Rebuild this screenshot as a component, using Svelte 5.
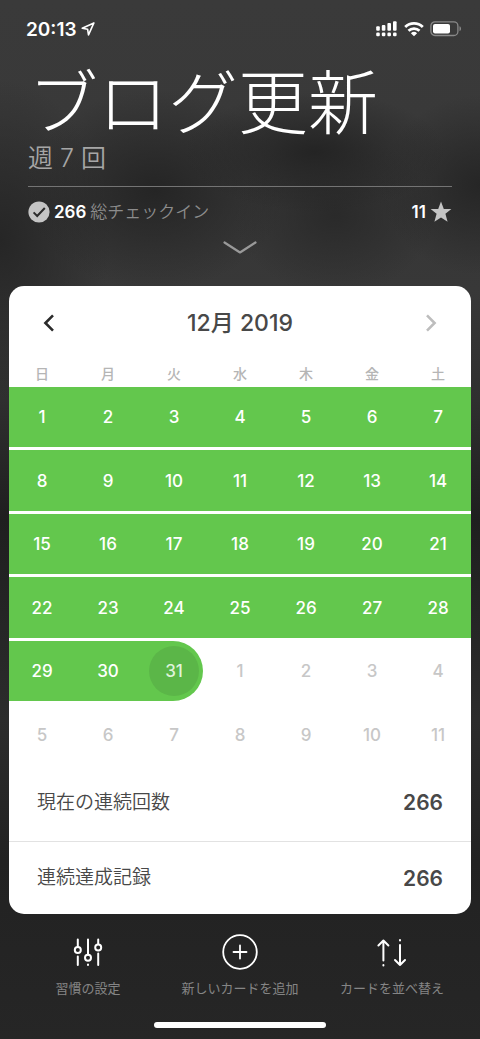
<script>
  const weekdays = ['日', '月', '火', '水', '木', '金', '土'];
  const today = 31;
  const daysInMonth = 31;

  const weeks = Array.from({ length: 6 }, (_, w) =>
    Array.from({ length: 7 }, (_, d) => {
      const n = w * 7 + d + 1;
      return {
        label: n > daysInMonth ? n - daysInMonth : n,
        done: n <= daysInMonth,
        today: n === today
      };
    })
  );

  const stats = [
    { label: '現在の連続回数', value: 266 },
    { label: '連続達成記録', value: 266 }
  ];
</script>

<div class="screen">
  <div class="status">
    <div class="time">
      <span>20:13</span>
      <svg width="14" height="14" viewBox="0 0 14 14" fill="none" stroke="#fff" stroke-width="1.6" stroke-linejoin="round">
        <path d="M12.9 0.9 1.2 6.2 6.6 7.2 7.5 12.9Z" />
      </svg>
    </div>
    <div class="signals">
      <svg width="22" height="16" viewBox="0 0 22 16" fill="#fff">
        <rect x="0.2" y="5.3" width="3.6" height="4.4" rx="1" />
        <rect x="5.8" y="4" width="3.6" height="5.7" rx="1" />
        <rect x="11.4" y="2" width="3.6" height="7.7" rx="1" />
        <rect x="17" y="0.2" width="3.6" height="9.5" rx="1" />
        <rect x="0.2" y="11.5" width="3.6" height="3.8" rx="1.2" />
        <rect x="5.8" y="11.5" width="3.6" height="3.8" rx="1.2" />
        <rect x="11.4" y="11.5" width="3.6" height="3.8" rx="1.2" />
        <rect x="17" y="11.5" width="3.6" height="3.8" rx="1.2" />
      </svg>
      <svg width="20" height="16" viewBox="0 0 20 16" fill="none" stroke="#fff" stroke-width="2.8">
        <path d="M1.2 6a12.6 12.6 0 0 1 17.6 0" />
        <path d="M4.5 9.8a8 8 0 0 1 11 0" />
        <path d="M10 15.3 6.9 12.2a4.5 4.5 0 0 1 6.2 0Z" fill="#fff" stroke="none" />
      </svg>
      <svg width="32" height="16" viewBox="0 0 32 16">
        <rect x="0.9" y="0.9" width="27" height="13.6" rx="4" fill="none" stroke="#8a8a8a" stroke-width="1.3" />
        <rect x="3" y="3" width="17" height="9.5" rx="2" fill="#fff" />
        <path d="M29.5 5.3c2 .6 2 4.2 0 4.8Z" fill="#8a8a8a" />
      </svg>
    </div>
  </div>

  <header>
    <h1>ブログ更新</h1>
    <p class="freq">週 7 回</p>
    <div class="summary">
      <div class="checkins">
        <svg width="22" height="22" viewBox="0 0 22 22">
          <circle cx="11" cy="11" r="10.6" fill="#c4c4c4" />
          <path d="M5.6 11.4 9.2 15 16.8 7" fill="none" stroke="#2b2b2b" stroke-width="2" />
        </svg>
        <strong>266</strong>
        <span>総チェックイン</span>
      </div>
      <div class="stars">
        <strong>11</strong>
        <svg width="22" height="22" viewBox="0 0 22 22" fill="#c4c4c4">
          <path d="M11 .6 13.8 8H21.4L15.4 12.8 17.6 20.8 11 16.4 4.4 20.8 6.6 12.8.6 8H8.2Z" />
        </svg>
      </div>
    </div>
    <button class="expand" aria-label="詳細">
      <svg width="36" height="16" viewBox="0 0 36 16" fill="none" stroke="#999" stroke-width="2.2" stroke-linecap="round" stroke-linejoin="round">
        <path d="M2.5 2.5 18 12.5 33.5 2.5" />
      </svg>
    </button>
  </header>

  <main>
    <div class="month">
      <button aria-label="前の月">
        <svg width="14" height="20" viewBox="0 0 14 20" fill="none" stroke="#2b2b2b" stroke-width="2.6">
          <path d="M11 2.4 3.4 10 11 17.6" />
        </svg>
      </button>
      <h2>12月 2019</h2>
      <button aria-label="次の月">
        <svg width="14" height="20" viewBox="0 0 14 20" fill="none" stroke="#bdbdbd" stroke-width="2.6">
          <path d="M3 2.4 10.6 10 3 17.6" />
        </svg>
      </button>
    </div>

    <table>
      <thead>
        <tr>
          {#each weekdays as day}
            <th scope="col">{day}</th>
          {/each}
        </tr>
      </thead>
      <tbody>
        {#each weeks as week}
          <tr>
            {#each week as day}
              <td>
                <button class="day" class:done={day.done} class:today={day.today}>
                  <span>{day.label}</span>
                </button>
              </td>
            {/each}
          </tr>
        {/each}
      </tbody>
    </table>

    <dl>
      {#each stats as stat}
        <div class="stat">
          <dt>{stat.label}</dt>
          <dd>{stat.value}</dd>
        </div>
      {/each}
    </dl>
  </main>

  <nav>
    <button>
      <svg width="36" height="36" viewBox="0 0 36 36" fill="none" stroke="#fff" stroke-width="2" stroke-linecap="round">
        <path d="M7.8 5.5V12.5M7.8 22.5V31M18 5.5V20.5M18 30.5V31M28.2 5.5V10M28.2 19.5V31" />
        <circle cx="7.8" cy="16" r="3" />
        <circle cx="18" cy="23.8" r="3" />
        <circle cx="28.2" cy="13.4" r="3" />
      </svg>
      <span>習慣の設定</span>
    </button>
    <button>
      <svg width="36" height="36" viewBox="0 0 36 36" fill="none" stroke="#fff" stroke-width="1.8" stroke-linecap="round">
        <circle cx="18" cy="18" r="16.8" />
        <path d="M11.5 18H24.5M18 11.5V24.5" />
      </svg>
      <span>新しいカードを追加</span>
    </button>
    <button>
      <svg width="36" height="36" viewBox="0 0 36 36" fill="none" stroke="#fff" stroke-width="2" stroke-linecap="round" stroke-linejoin="round">
        <path d="M9.4 26.5V6.5M4.4 11.5 9.4 6.5 14.4 11.5M9.4 31V31.4M26 11V31M21 26 26 31 31 26M26 6V6.4" />
      </svg>
      <span>カードを並べ替え</span>
    </button>
  </nav>
  <div class="home"></div>
</div>

<style>
  :global(body) {
    background: #242424;
  }

  .screen {
    min-height: 100vh;
    box-sizing: border-box;
    display: flex;
    flex-direction: column;
    color: #fff;
    font-family: Inter, 'Noto Sans CJK JP', sans-serif;
    background:
      radial-gradient(ellipse 130px 60px at 315px 152px, #242424 0%, #24242400 100%),
      radial-gradient(ellipse 100px 90px at 480px 185px, #262626 0%, #26262600 100%),
      radial-gradient(ellipse 100px 80px at 335px 215px, #2a2a2a 0%, #2a2a2a00 100%),
      radial-gradient(ellipse 130px 100px at 155px 190px, #252525 0%, #25252500 100%),
      radial-gradient(ellipse 110px 160px at 0 240px, #262626 0%, #26262600 100%),
      linear-gradient(#3a3a3a 0, #393939 120px, #363636 200px, #383838 290px, #2f2f2f 400px, #1f1f1f 520px, #2c2c2c 720px, #222 860px, #262626 100%);
  }

  button {
    font: inherit;
    color: inherit;
    background: none;
    border: 0;
    padding: 0;
    cursor: pointer;
  }

  svg {
    display: block;
    flex: none;
  }

  .status {
    display: flex;
    justify-content: space-between;
    align-items: center;
    height: 20px;
    padding: 19px 18px 0 26px;
  }

  .time {
    display: flex;
    align-items: center;
    gap: 4px;
    font-size: 19px;
    font-weight: 600;
  }

  .signals {
    display: flex;
    gap: 6px;
  }

  header {
    padding: 16px 28px 0;
  }

  h1 {
    margin: 0;
    font-family: 'Noto Sans CJK JP', sans-serif;
    font-size: 70px;
    font-weight: 300;
    line-height: 88px;
    white-space: nowrap;
  }

  .freq {
    margin: 0;
    padding: 1px 0 13px;
    border-bottom: 1px solid #747474;
    font-size: 25px;
    font-weight: 350;
    line-height: 29px;
    color: #a6a6a6;
  }

  .summary {
    display: flex;
    justify-content: space-between;
    padding-top: 13px;
    line-height: 24px;
  }

  .checkins,
  .stars {
    display: flex;
    align-items: center;
    gap: 4px;
  }

  .summary strong {
    font-size: 17px;
    font-weight: 600;
  }

  .checkins span {
    font-size: 17px;
    font-weight: 350;
    color: #8c8c8c;
  }

  .expand {
    display: block;
    margin: 16px auto 0;
  }

  main {
    margin: 30px 9px 0;
    background: #fff;
    border-radius: 15px;
    overflow: hidden;
    color: #484848;
  }

  .month {
    display: flex;
    justify-content: space-between;
    align-items: center;
    height: 74px;
    padding: 0 33px;
  }

  h2 {
    margin: 0;
    padding-bottom: 4px;
    font-size: 23px;
    font-weight: 500;
  }

  table {
    width: 100%;
    table-layout: fixed;
    border-collapse: collapse;
  }

  th {
    height: 27px;
    padding: 0;
    font-size: 14px;
    font-weight: 500;
    line-height: 26px;
    color: #b5b5b5;
  }

  td {
    height: 60px;
    padding: 0 0 3px;
  }

  tr:nth-child(even) td {
    height: 61px;
  }

  .day {
    display: block;
    width: 100%;
    height: 60px;
    font-size: 17px;
    font-weight: 500;
    color: #c7c7c7;
  }

  tr:nth-child(even) .day {
    height: 61px;
  }

  .day.done {
    background: #63c74d;
    color: #fff;
  }

  .day.today {
    width: calc(100% - 4px);
    padding-left: 4px;
    border-radius: 0 30px 30px 0;
    color: #dff3da;
  }

  .today span {
    display: block;
    width: 50px;
    margin: 0 auto;
    border-radius: 50%;
    line-height: 50px;
    background: #5bb648;
  }

  dl {
    margin: 0;
  }

  .stat {
    display: flex;
    justify-content: space-between;
    align-items: center;
    height: 72px;
    padding: 0 28px;
  }

  .stat:first-child {
    height: 69px;
    padding-bottom: 4px;
  }

  .stat + .stat {
    border-top: 1px solid #e2e2e2;
  }

  dt {
    font-size: 19px;
    font-weight: 350;
    line-height: 24px;
  }

  dd {
    margin: 0;
    font-size: 21px;
    font-weight: 600;
  }

  nav {
    display: grid;
    grid-template-columns: repeat(3, 1fr);
    padding: 20px 12px 0;
  }

  nav button {
    display: flex;
    flex-direction: column;
    align-items: center;
    gap: 8px;
    font-size: 13px;
    line-height: 20px;
    color: #858585;
    white-space: nowrap;
  }

  .home {
    width: 36%;
    height: 6px;
    margin: 24px auto 11px;
    border-radius: 3px;
    background: #fff;
  }
</style>
